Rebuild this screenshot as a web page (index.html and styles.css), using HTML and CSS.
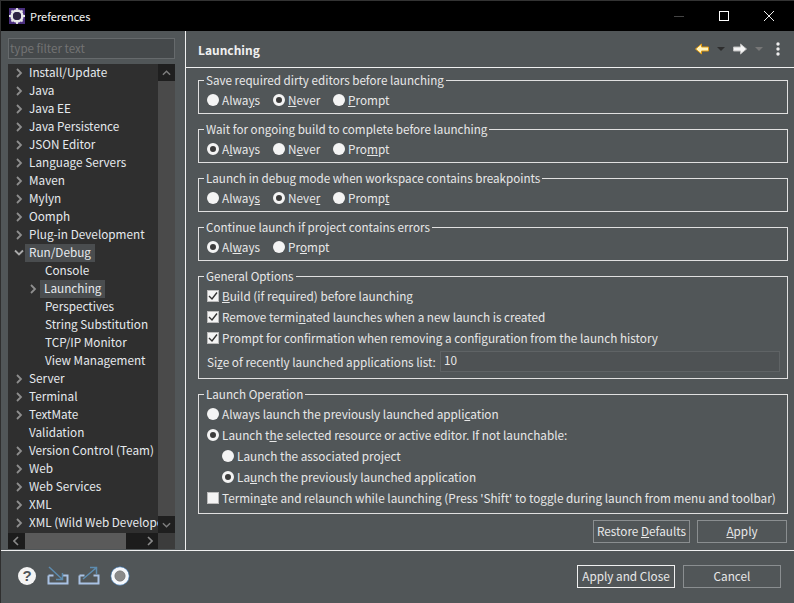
FILE: index.html
```html
<!DOCTYPE html>
<html lang="en">
<head>
<meta charset="utf-8">
<title>Preferences</title>
<link rel="stylesheet" href="styles.css">
</head>
<body>
<div class="window">
  <header class="titlebar">
    <svg class="appicon" width="16" height="16" viewBox="0 0 16 16"><rect width="16" height="16" fill="#4b2f7f"/><circle cx="8" cy="8" r="5.4" fill="none" stroke="#e8e8e8" stroke-width="2.6"/><circle cx="8" cy="8" r="4" fill="#2c2340"/><path d="M8 0v2.500M8 13.500v2.500M0 8h2.500M13.500 8h2.500M2.500 2.500l1.800 1.800M13.500 2.500l-1.800 1.800M2.500 13.500l1.800-1.800M13.500 13.500l-1.800-1.800" stroke="#e8e8e8" stroke-width="1.8"/></svg>
    <span class="wintitle">Preferences</span>
    <div class="winctl">
      <svg width="10" height="10" viewBox="0 0 10 10"><path d="M0 5.500h10" stroke="#444"/></svg>
      <svg width="10" height="10" viewBox="0 0 10 10"><rect x=".5" y=".5" width="9" height="9" fill="none" stroke="#fff"/></svg>
      <svg width="10" height="10" viewBox="0 0 10 10"><path d="M0 0l10 10M10 0L0 10" stroke="#eee"/></svg>
    </div>
  </header>
  <div class="main">
    <aside class="side">
      <div class="filter">type filter text</div>
      <div class="treebox">
        <div class="treeinner">
          <ul class="tree">
            <li class="node"><svg class="tw" viewBox="0 0 8 10"><path d="M2 1l4 4-4 4" /></svg><span class="lab">Install/Update</span></li>
            <li class="node"><svg class="tw" viewBox="0 0 8 10"><path d="M2 1l4 4-4 4" /></svg><span class="lab">Java</span></li>
            <li class="node"><svg class="tw" viewBox="0 0 8 10"><path d="M2 1l4 4-4 4" /></svg><span class="lab">Java EE</span></li>
            <li class="node"><svg class="tw" viewBox="0 0 8 10"><path d="M2 1l4 4-4 4" /></svg><span class="lab">Java Persistence</span></li>
            <li class="node"><svg class="tw" viewBox="0 0 8 10"><path d="M2 1l4 4-4 4" /></svg><span class="lab">JSON Editor</span></li>
            <li class="node"><svg class="tw" viewBox="0 0 8 10"><path d="M2 1l4 4-4 4" /></svg><span class="lab">Language Servers</span></li>
            <li class="node"><svg class="tw" viewBox="0 0 8 10"><path d="M2 1l4 4-4 4" /></svg><span class="lab">Maven</span></li>
            <li class="node"><svg class="tw" viewBox="0 0 8 10"><path d="M2 1l4 4-4 4" /></svg><span class="lab">Mylyn</span></li>
            <li class="node"><svg class="tw" viewBox="0 0 8 10"><path d="M2 1l4 4-4 4" /></svg><span class="lab">Oomph</span></li>
            <li class="node"><svg class="tw" viewBox="0 0 8 10"><path d="M2 1l4 4-4 4" /></svg><span class="lab">Plug-in Development</span></li>
            <li class="node"><svg class="tw open" viewBox="0 0 10 8"><path d="M1 1.500l4 4 4-4" /></svg><span class="lab hl">Run/Debug</span></li>
            <li class="node sub"><span class="lab">Console</span></li>
            <li class="node sub"><svg class="tw twsub" viewBox="0 0 8 10"><path d="M2 1l4 4-4 4" /></svg><span class="lab hl">Launching</span></li>
            <li class="node sub"><span class="lab">Perspectives</span></li>
            <li class="node sub"><span class="lab">String Substitution</span></li>
            <li class="node sub"><span class="lab">TCP/IP Monitor</span></li>
            <li class="node sub"><span class="lab">View Management</span></li>
            <li class="node"><svg class="tw" viewBox="0 0 8 10"><path d="M2 1l4 4-4 4" /></svg><span class="lab">Server</span></li>
            <li class="node"><svg class="tw" viewBox="0 0 8 10"><path d="M2 1l4 4-4 4" /></svg><span class="lab">Terminal</span></li>
            <li class="node"><svg class="tw" viewBox="0 0 8 10"><path d="M2 1l4 4-4 4" /></svg><span class="lab">TextMate</span></li>
            <li class="node leaf"><span class="lab">Validation</span></li>
            <li class="node"><svg class="tw" viewBox="0 0 8 10"><path d="M2 1l4 4-4 4" /></svg><span class="lab">Version Control (Team)</span></li>
            <li class="node"><svg class="tw" viewBox="0 0 8 10"><path d="M2 1l4 4-4 4" /></svg><span class="lab">Web</span></li>
            <li class="node"><svg class="tw" viewBox="0 0 8 10"><path d="M2 1l4 4-4 4" /></svg><span class="lab">Web Services</span></li>
            <li class="node"><svg class="tw" viewBox="0 0 8 10"><path d="M2 1l4 4-4 4" /></svg><span class="lab">XML</span></li>
            <li class="node"><svg class="tw" viewBox="0 0 8 10"><path d="M2 1l4 4-4 4" /></svg><span class="lab">XML (Wild Web Developer)</span></li>
          </ul>
          <div class="vbar">
            <svg class="sbarrow" viewBox="0 0 10 6"><path d="M1 5l4-4 4 4"/></svg>
            <div class="vthumb"></div>
            <svg class="sbarrow" viewBox="0 0 10 6"><path d="M1 1l4 4 4-4"/></svg>
          </div>
        </div>
        <div class="hrow">
          <div class="hbar">
            <svg class="sbarrowh" viewBox="0 0 6 10"><path d="M5 1L1 5l4 4"/></svg>
            <div class="hthumb"></div>
            <svg class="sbarrowh end" viewBox="0 0 6 10"><path d="M1 1l4 4-4 4"/></svg>
          </div>
          <div class="corner"></div>
        </div>
      </div>
    </aside>
    <section class="content">
      <div class="pagehead">
        <h1 class="pagetitle">Launching</h1>
        <div class="navtools">
          <svg width="16" height="14" viewBox="0 0 16 14"><path d="M1.500 7l6-5v3h7v4h-7v3z" fill="#fff4c0" stroke="#e09a10"/></svg>
          <svg width="8" height="4" viewBox="0 0 8 4"><path d="M0 0h8L4 4z" fill="#2e2e2e"/></svg>
          <svg width="16" height="14" viewBox="0 0 16 14"><path d="M14.500 7l-6-5v3h-7v4h7v3z" fill="#f4f4f4" stroke="#bdbdbd"/></svg>
          <svg width="8" height="4" viewBox="0 0 8 4"><path d="M0 0h8L4 4z" fill="#777"/></svg>
          <svg class="navmenu" width="4" height="14" viewBox="0 0 4 14"><circle cx="2" cy="2" r="1.700" fill="#eee"/><circle cx="2" cy="7" r="1.700" fill="#eee"/><circle cx="2" cy="12" r="1.700" fill="#eee"/></svg>
        </div>
      </div>
      <div class="pagebody">
        <fieldset class="group">
          <legend>Save required dirty editors before launching</legend>
          <div class="radios">
            <label class="opt w-a"><i class="radio"></i><span>Alwa<u>y</u>s</span></label>
            <label class="opt w-n"><i class="radio on"></i><span><u>N</u>ever</span></label>
            <label class="opt"><i class="radio"></i><span><u>P</u>rompt</span></label>
          </div>
        </fieldset>
        <fieldset class="group">
          <legend>Wait for ongoing build to complete before launching</legend>
          <div class="radios">
            <label class="opt w-a"><i class="radio on"></i><span>A<u>l</u>ways</span></label>
            <label class="opt w-n"><i class="radio"></i><span>N<u>e</u>ver</span></label>
            <label class="opt"><i class="radio"></i><span>Pro<u>m</u>pt</span></label>
          </div>
        </fieldset>
        <fieldset class="group">
          <legend>Launch in debug mode when workspace contains breakpoints</legend>
          <div class="radios">
            <label class="opt w-a"><i class="radio"></i><span>Alway<u>s</u></span></label>
            <label class="opt w-n"><i class="radio on"></i><span>Neve<u>r</u></span></label>
            <label class="opt"><i class="radio"></i><span>Promp<u>t</u></span></label>
          </div>
        </fieldset>
        <fieldset class="group">
          <legend>Continue launch if project contains errors</legend>
          <div class="radios">
            <label class="opt w-a"><i class="radio on"></i><span>Al<u>w</u>ays</span></label>
            <label class="opt"><i class="radio"></i><span>Pr<u>o</u>mpt</span></label>
          </div>
        </fieldset>
        <fieldset class="group general">
          <legend>General Options</legend>
          <label class="chk"><i class="box"><svg width="10" height="10" viewBox="0 0 10 10"><path d="M1 5l3 3 5-6.500" fill="none" stroke="#333" stroke-width="1.400"/></svg></i><span><u>B</u>uild (if required) before launching</span></label>
          <label class="chk"><i class="box"><svg width="10" height="10" viewBox="0 0 10 10"><path d="M1 5l3 3 5-6.500" fill="none" stroke="#333" stroke-width="1.400"/></svg></i><span>Remove termi<u>n</u>ated launches when a new launch is created</span></label>
          <label class="chk"><i class="box"><svg width="10" height="10" viewBox="0 0 10 10"><path d="M1 5l3 3 5-6.500" fill="none" stroke="#333" stroke-width="1.400"/></svg></i><span>Prompt for confirmation when removin<u>g</u> a configuration from the launch history</span></label>
          <div class="sizerow"><span class="sizelabel">Si<u>z</u>e of recently launched applications list:</span><div class="numfield">10</div></div>
        </fieldset>
        <fieldset class="group oper">
          <legend>Launch Operation</legend>
          <label class="chk"><i class="radio"></i><span>Always launch the previously launched appli<u>c</u>ation</span></label>
          <label class="chk"><i class="radio on"></i><span>Launch t<u>h</u>e selected resource or active editor. If not launchable:</span></label>
          <label class="chk ind"><i class="radio"></i><span>Launch the associated pro<u>j</u>ect</span></label>
          <label class="chk ind"><i class="radio on"></i><span>La<u>u</u>nch the previously launched application</span></label>
          <label class="chk"><i class="box"></i><span>Termin<u>a</u>te and relaunch while launching (Press 'Shift' to toggle during launch from menu and toolbar)</span></label>
        </fieldset>
        <div class="pagebtns">
          <button class="btn restore">Restore <u>D</u>efaults</button>
          <button class="btn apply"><u>A</u>pply</button>
        </div>
      </div>
    </section>
  </div>
  <footer class="footer">
    <div class="fticons">
      <svg width="20" height="20" viewBox="0 0 20 20"><circle cx="10" cy="10" r="9" fill="#f4f4f4"/><text x="10" y="15" class="qm">?</text></svg>
      <svg class="ftimport" width="22" height="20" viewBox="0 0 22 20"><path d="M1.500 9.500h5M15.500 9.500h5v8h-19v-8" fill="none" stroke="#a9c2e4" stroke-width="2"/><path d="M2 1l13 12M15.500 7v6.500H9" fill="none" stroke="#5d8cb0" stroke-width="1.500"/></svg>
      <svg width="22" height="20" viewBox="0 0 22 20"><path d="M1.500 9.500h5M15.500 9.500h5v8h-19v-8" fill="none" stroke="#a9c2e4" stroke-width="2"/><path d="M5 13L18 2M12 1.500h6.500V8" fill="none" stroke="#5d8cb0" stroke-width="1.500"/></svg>
      <svg class="ftrecord" width="20" height="20" viewBox="0 0 20 20"><circle cx="10" cy="10" r="9.200" fill="#f6f8fc" stroke="#2f6fb0" stroke-width=".6"/><circle cx="10" cy="10" r="5.200" fill="#8a8a8a" stroke="#6f6f6f" stroke-width=".6"/></svg>
    </div>
    <div class="ftbtns">
      <button class="btn primary">Apply and Close</button>
      <button class="btn cancel">Cancel</button>
    </div>
  </footer>
</div>
</body>
</html>
```
FILE: styles.css
```css
* { box-sizing: border-box; }
html, body { margin: 0; padding: 0; }
body { width: 794px; height: 603px; overflow: hidden; background: #515658; color: #e8e8e8;
  font: 11.75px/16px "Noto Sans CJK KR", "Noto Sans", sans-serif; }
.window { width: 794px; height: 603px; display: flex; flex-direction: column; background: #515658; border-left: 1px solid #2f2f2f; }
.titlebar { height: 31px; flex: none; background: #000; display: flex; align-items: center; padding-left: 8px; border-top: 1px solid #333; }
.appicon { flex: none; }
.wintitle { margin-left: 5px; color: #f4f4f4; font-size: 11px; }
.winctl { margin-left: auto; display: flex; align-items: center; gap: 35px; padding-right: 20px; }
.main { height: 520px; flex: none; display: flex; border-bottom: 1px solid #f0f0f0; }
.side { width: 185px; flex: none; padding: 7px 10px 1px 7px; border-right: 1px solid #f0f0f0; display: flex; flex-direction: column; gap: 5px; }
.filter { height: 21px; flex: none; background: #45494b; border: 1px solid #666a6c; color: #737373; padding: 1px; font-size: 11.6px; line-height: 16px; }
.treebox { flex: 1; min-height: 0; background: #2f2f2f; display: flex; flex-direction: column; }
.treeinner { flex: 1; min-height: 0; display: flex; }
.tree { list-style: none; margin: 0; padding: 0; flex: 1; min-width: 0; overflow: hidden; }
.node { height: 18px; display: flex; align-items: center; white-space: nowrap; padding-left: 7px; color: #e6eaee; }
.node.leaf { padding-left: 20px; }
.node.sub { padding-left: 36px; position: relative; }
.tw { width: 8px; height: 10px; flex: none; margin-right: 5px; fill: none; stroke: #8e8e8e; stroke-width: 1.8; }
.tw.open { width: 10px; height: 8px; margin-right: 4px; margin-left: -1px; stroke: #aaa; }
.twsub { position: absolute; left: 21px; margin: 0; }
.lab { padding: 0 0 2px 1px; line-height: 16px; height: 18px; display: block; }
.hl { background: #4a4d4f; padding-left: 4px; padding-right: 4px; margin-left: -3px; }
.sub .hl { margin-left: -4px; }
.vbar { width: 17px; flex: none; background: #1f1f1f; display: flex; flex-direction: column; }
.vthumb { flex: 1; background: #4a4a4a; }
.sbarrow { width: 9px; height: 6px; margin: 6px auto 5px; fill: none; stroke: #7d7d7d; stroke-width: 1.6; flex: none; }
.hrow { height: 16px; flex: none; display: flex; }
.hbar { flex: 1; background: #1c1c1c; display: flex; align-items: center; padding: 0 5px; }
.hthumb { width: 101px; height: 16px; background: #5a5a5a; margin-left: 6px; flex: none; }
.sbarrowh { width: 6px; height: 10px; fill: none; stroke: #8a8a8a; stroke-width: 1.6; flex: none; }
.sbarrowh.end { margin-left: auto; }
.corner { width: 17px; background: #3c3c3c; }
.content { flex: 1; min-width: 0; display: flex; flex-direction: column; }
.pagehead { height: 37px; flex: none; display: flex; align-items: center; padding: 0 14px 0 12px; border-bottom: 1px solid #f0f0f0; }
.pagetitle { margin: 2px 0 0; font-size: 12px; line-height: 16px; font-weight: 700; color: #f0f0f0; }
.navtools { margin-left: auto; display: flex; align-items: center; gap: 7px; }
.navmenu { margin-left: 6px; }
.pagebody { flex: 1; padding: 4px 6px 0 12px; display: flex; flex-direction: column; }
.group { margin: 0 0 7px; padding: 3px 0 0 8px; border: 1px solid #e0e0e0; height: 42px; min-width: 0; }
.group legend { padding: 0 2px; margin-left: -3px; line-height: 16px; font-size: 11.65px; }
.radios { display: flex; }
.opt { display: flex; align-items: center; gap: 3px; height: 18px; }
.w-a { width: 66px; }
.w-n { width: 60px; }
.radio { width: 12px; height: 12px; border-radius: 50%; background: #f4f4f4; flex: none; display: block; }
.radio.on { background: #3c3c3c; border: 3px solid #f4f4f4; }
.group.general { height: 111px; padding-top: 1px; }
.group.oper { height: 128px; margin-top: 0; margin-bottom: 0; padding-top: 1px; }
.chk { display: flex; align-items: center; gap: 3px; height: 21px; white-space: nowrap; }
.chk.ind { margin-left: 15px; }
.box { width: 12px; height: 12px; background: #f4f4f4; border: 1px solid #bbb; display: block; flex: none; }
.box svg { display: block; }
.sizerow { display: flex; align-items: center; height: 24px; margin-top: 1px; }
.sizelabel { width: 233px; flex: none; padding-top: 2px; }
.numfield { flex: 1; height: 21px; margin-right: 7px; background: #4e5254; border: 1px solid #5f6365; padding-left: 3px; line-height: 16px; }
.pagebtns { display: flex; justify-content: flex-end; gap: 7px; margin-top: 6px; padding-right: 1px; }
.btn { height: 23px; padding: 0 0 1px; background: #515658; border: 1px solid #8a8e90; color: #e8e8e8; font: inherit; text-align: center; }
.restore { width: 97px; }
.apply { width: 90px; }
.footer { flex: 1; display: flex; align-items: flex-start; justify-content: space-between; padding: 14px 13px 0 16px; }
.fticons { display: flex; gap: 9px; align-items: center; padding-top: 1px; }
.ftimport { margin-left: 1px; }
.ftrecord { margin-left: 1px; }
.qm { font: 700 15px "Liberation Sans", sans-serif; fill: #50565a; text-anchor: middle; }
.ftbtns { display: flex; gap: 8px; }
.primary { width: 98px; border-color: #f0f0f0; }
.cancel { width: 98px; }
```
